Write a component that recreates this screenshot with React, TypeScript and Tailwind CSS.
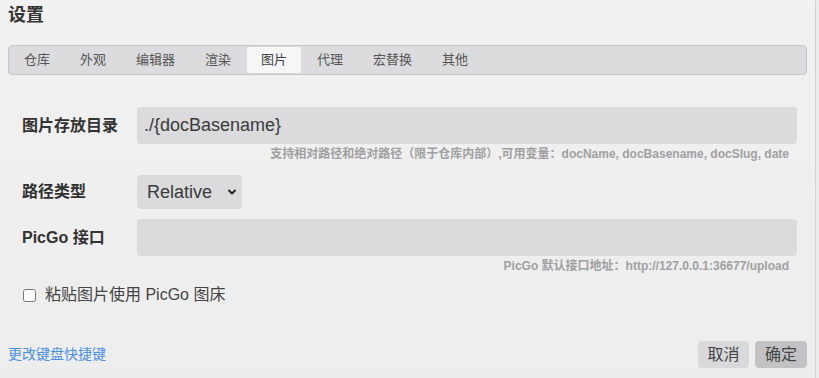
const tabs = ["仓库", "外观", "编辑器", "渲染", "图片", "代理", "宏替换", "其他"];

function Hint({ children }: { children: React.ReactNode }) {
  return (
    <div className="mt-[2px] pr-[8px] text-right text-[12px] font-bold leading-[16px] text-[#a0a0a2]">
      {children}
    </div>
  );
}

export default function App() {
  return (
    <div className="flex h-[378px] w-[819px] overflow-hidden bg-[#ececec] font-['Liberation_Sans','Noto_Sans_CJK_SC',sans-serif] text-[#333]">
      <div className="flex w-[816px] flex-col border-r border-[#d2d2d2] bg-gradient-to-b from-[#f1f1f1] via-[#efefef] to-[#ededed] px-2">
        <h1 className="mt-[3px] text-[18px] font-bold leading-[24px] text-[#333]">设置</h1>

        <div className="mt-[18px] flex h-[30px] items-stretch gap-[2px] rounded-[4px] border border-[#c6c6c8] bg-[#dcdcde] p-px">
          {tabs.map((t) => (
            <div
              key={t}
              className={
                t === "图片"
                  ? "flex items-center rounded-[3px] bg-[#f6f6f6] px-[14px] text-[13px] text-[#444]"
                  : "flex items-center px-[14px] text-[13px] text-[#555]"
              }
            >
              {t}
            </div>
          ))}
        </div>

        <div className="mt-[32px] pr-[10px]">
          <div className="flex items-center">
            <label className="w-[129px] pl-[14px] text-[16px] font-bold">图片存放目录</label>
            <div className="flex h-[37px] flex-1 items-center rounded-[4px] bg-[#dbdbdd] px-[7px] text-[18px] text-[#3a3a3a]">
              ./{"{"}docBasename{"}"}
            </div>
          </div>
          <Hint>支持相对路径和绝对路径（限于仓库内部）,可用变量：docName, docBasename, docSlug, date</Hint>

          <div className="mt-[13px] flex items-center">
            <label className="w-[129px] pl-[14px] text-[16px] font-bold">路径类型</label>
            <div className="flex h-[34px] w-[105px] items-center justify-between rounded-[4px] bg-[#dbdbdd] pl-[10px] pr-[5px] text-[18px] text-[#3a3a3a]">
              <span>Relative</span>
              <svg className="h-[10px] w-[10px]" viewBox="0 0 10 10" fill="none" stroke="#222" strokeWidth={2} strokeLinecap="round" strokeLinejoin="round">
                <path d="M2 3.5l3 3 3-3" />
              </svg>
            </div>
          </div>

          <div className="mt-[10px] flex items-center">
            <label className="w-[129px] pl-[14px] text-[16px] font-bold">PicGo 接口</label>
            <div className="h-[37px] flex-1 rounded-[4px] bg-[#dbdbdd]" />
          </div>
          <Hint>PicGo 默认接口地址：http://127.0.0.1:36677/upload</Hint>

          <label className="mt-[11px] flex h-[20px] items-center pl-[15px] text-[16px] text-[#444]">
            <input type="checkbox" className="m-0 h-[13px] w-[13px]" />
            <span className="ml-[9px]">粘贴图片使用 PicGo 图床</span>
          </label>
        </div>

        <div className="mt-[36px] flex items-center justify-between">
          <a className="text-[14px] text-[#4a90e2]">更改键盘快捷键</a>
          <div className="flex gap-[6px]">
            <button className="h-[27px] w-[51px] rounded-[4px] bg-[#d9d9db] text-[16px] text-[#444]">取消</button>
            <button className="h-[27px] w-[52px] rounded-[4px] bg-[#c2c2c5] text-[16px] text-[#444]">确定</button>
          </div>
        </div>
      </div>
    </div>
  );
}
